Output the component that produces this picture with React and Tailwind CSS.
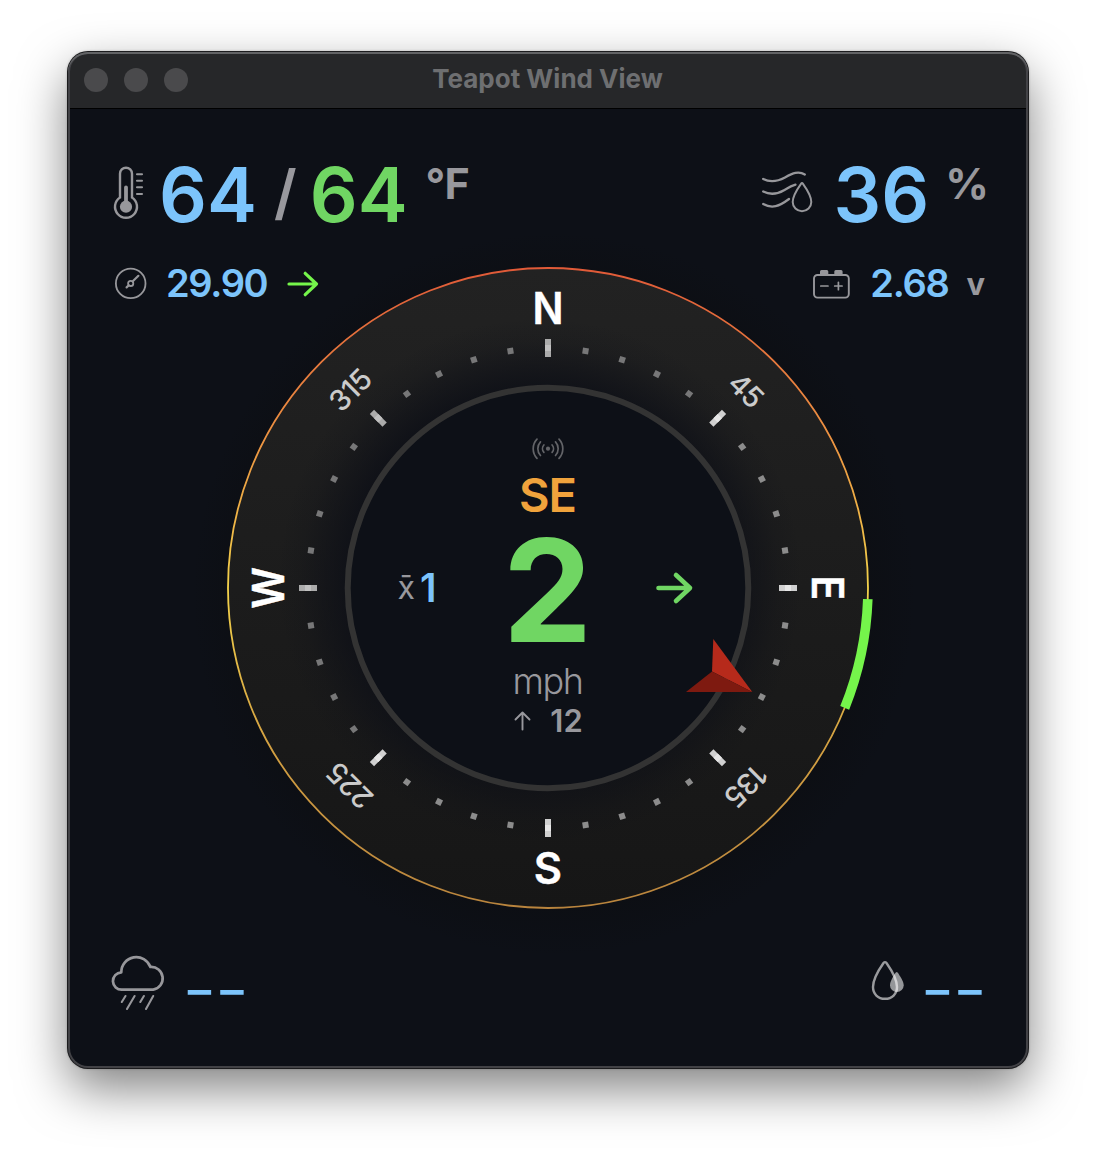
import React from "react";

const MAJOR = [0, 45, 90, 135, 180, 225, 270, 315];
const MINOR = Array.from({ length: 40 }, (_, i) => i * 9).filter((a) => a % 45 !== 0);

const CARDINALS = [
  { angle: 0, text: "N" },
  { angle: 90, text: "E" },
  { angle: 270, text: "W" },
];

const DEGREES = [45, 135, 225, 315];

function ThermometerIcon() {
  return (
    <svg className="w-8 h-14 shrink-0" viewBox="0 0 32 56" fill="none" stroke="#97979b" strokeWidth="2.4" strokeLinecap="round">
      <path d="M8 9.7a6 6 0 0 1 12 0V33.5A11 11 0 1 1 8 33.5Z" />
      <path d="M14 23.5V40" strokeWidth="3.8" />
      <circle cx="14" cy="42.7" r="6.1" fill="#97979b" stroke="none" />
      <path d="M25 10.3h5M25 16.7h5M25 23.3h5M25 30h5" strokeWidth="2.1" />
    </svg>
  );
}

function GaugeIcon() {
  return (
    <svg className="w-[34px] h-[34px] shrink-0" viewBox="0 0 34 34" fill="none" stroke="#97979b" strokeWidth="1.8" strokeLinecap="round">
      <circle cx="16.7" cy="16.4" r="14.8" />
      <circle cx="16.7" cy="16.4" r="2.6" />
      <path d="M18.8 14.3 24.4 8.8M14.8 18.3l-2.2 2.1" strokeWidth="2.2" />
    </svg>
  );
}

function HumidityIcon() {
  return (
    <svg className="w-[54px] h-[46px] shrink-0" viewBox="0 0 54 46" fill="none" stroke="#97979b" strokeWidth="2.3" strokeLinecap="round">
      <path d="M3.2 10.9C11 15 17.5 13.4 25 9.4S38.5 2.5 44.8 6.5" />
      <path d="M3.2 23.5C11 27.5 17.5 26 24 22.2S31 18 35.5 16.7" />
      <path d="M3.2 36C12 41 19 38.5 29 31" />
      <path d="M41 15.8Q42 14.4 43 15.8C46 20 51.3 28.5 51.3 34A9.3 9.2 0 0 1 32.7 34C32.7 28.5 38 20 41 15.8Z" strokeWidth="2" />
    </svg>
  );
}

function BatteryIcon() {
  return (
    <svg className="w-10 h-8 shrink-0" viewBox="0 0 40 32" fill="none" stroke="#97979b" strokeWidth="1.9" strokeLinecap="round">
      <rect x="3" y="7" width="34.8" height="22.6" rx="3.5" />
      <path d="M9 6.5V3.5q0-1.5 1.5-1.5h5.3q1.5 0 1.5 1.5v3zM23.3 6.5V3.5q0-1.5 1.5-1.5h5.3q1.5 0 1.5 1.5v3z" fill="#97979b" stroke="none" />
      <path d="M9.8 18h7.2M23.7 18h7.4M27.4 14.3v7.4" strokeWidth="1.7" />
    </svg>
  );
}

function SignalIcon() {
  return (
    <svg className="w-9 h-[26px]" viewBox="0 0 36 26" fill="none" stroke="#636468" strokeWidth="1.7" strokeLinecap="round">
      <circle cx="18" cy="12.7" r="2.1" fill="#636468" stroke="none" />
      <path d="M13.9 9a5.6 5.6 0 0 0 0 7.4M22.1 9a5.6 5.6 0 0 1 0 7.4" />
      <path d="M10.5 5.9a10 10 0 0 0 0 13.6M25.5 5.9a10 10 0 0 1 0 13.6" />
      <path d="M7 3.1a14 14 0 0 0 0 19.2M29 3.1a14 14 0 0 1 0 19.2" />
    </svg>
  );
}

function RainIcon() {
  return (
    <svg className="w-14 h-[58px] shrink-0" viewBox="0 0 56 58" fill="none" stroke="#97979b" strokeWidth="2.7" strokeLinecap="round">
      <path d="M12 35.7A8.7 8.7 0 0 1 11.3 18.3A15 15 0 0 1 40.4 13A11.45 11.45 0 0 1 43.2 35.7Z" strokeLinejoin="round" />
      <path d="M15.5 42l-3.7 6M24.6 42 17 55M33.9 42l-3.6 6M43.2 42 36 55" strokeWidth="2.1" />
    </svg>
  );
}

function DropsIcon() {
  return (
    <svg className="w-9 h-11 shrink-0" viewBox="0 0 36 44" fill="none">
      <path d="M14.5 5Q16 3.2 17.5 5C21 10 28 21.5 28 29C28 36 23 40.8 16 40.8C9 40.8 4 36 4 29C4 21.5 11 10 14.5 5Z" stroke="#fff" strokeOpacity="0.58" strokeWidth="2.4" />
      <path d="M26.8 14.6Q27.7 13.4 28.6 14.6C31 18 34.7 23.5 34.7 27.3A6.85 6.8 0 0 1 21 27.3C21 23.5 24.4 18 26.8 14.6Z" fill="#fff" fillOpacity="0.56" />
    </svg>
  );
}

function Dial() {
  return (
    <svg className="col-start-1 row-start-1 w-[700px] h-[700px] overflow-visible" viewBox="-350 -350 700 700">
      <defs>
        <linearGradient id="face" x1="0" y1="0" x2="0" y2="1">
          <stop offset="0" stopColor="#222222" />
          <stop offset="1" stopColor="#161616" />
        </linearGradient>
        <linearGradient id="rim" x1="0" y1="0" x2="0" y2="1">
          <stop offset="0" stopColor="#e15a38" />
          <stop offset="0.25" stopColor="#ec8f41" />
          <stop offset="0.5" stopColor="#f3d24b" />
          <stop offset="0.75" stopColor="#d3a042" />
          <stop offset="1" stopColor="#b9843d" />
        </linearGradient>
        <radialGradient id="shade" gradientUnits="userSpaceOnUse" cx="-8" cy="-8" r="262">
          <stop offset="0.74" stopColor="#0e1017" stopOpacity="0.85" />
          <stop offset="0.83" stopColor="#0e1017" stopOpacity="0.5" />
          <stop offset="0.91" stopColor="#0e1017" stopOpacity="0.18" />
          <stop offset="1" stopColor="#0e1017" stopOpacity="0" />
        </radialGradient>
        <radialGradient id="halo" gradientUnits="userSpaceOnUse" cx="6" cy="6" r="362">
          <stop offset="0.87" stopColor="#0c0d10" stopOpacity="0.45" />
          <stop offset="1" stopColor="#0c0d10" stopOpacity="0" />
        </radialGradient>
      </defs>
      <circle cx="6" cy="6" r="362" fill="url(#halo)" />
      <circle r="320" fill="url(#face)" stroke="url(#rim)" strokeWidth="1.8" />
      <circle cx="-8" cy="-8" r="262" fill="url(#shade)" />
      {MINOR.map((angle) => (
        <rect key={angle} x="-3" y="-243" width="6" height="6" fill={angle < 225 && angle > 45 ? "#8c8c8c" : "#777778"} transform={`rotate(${angle})`} />
      ))}
      {MAJOR.map((angle) => (
        <g key={angle} transform={`rotate(${angle})`}>
          <rect x="-3" y="-249" width="6" height="18" fill={angle > 0 && angle < 270 ? "#d0d0d0" : "#ababab"} />
          <rect x="-3" y="-243" width="6" height="6" fill={angle > 0 && angle < 270 ? "#e6e6e6" : "#c0c0c0"} />
        </g>
      ))}
      {CARDINALS.map(({ angle, text }) => (
        <text key={angle} y="-264.5" textAnchor="middle" className="text-[43.5px] font-semibold fill-white" stroke="#fff" strokeWidth="0.4" transform={`rotate(${angle}) scale(0.94 1)`}>
          {text}
        </text>
      ))}
      <text y="295.5" textAnchor="middle" className="text-[43.5px] font-semibold fill-white" stroke="#fff" strokeWidth="0.4">
        S
      </text>
      {DEGREES.map((angle) => (
        <text key={angle} y="-269.5" textAnchor="middle" className="text-[29px] font-medium tracking-[-0.03em] fill-[#cbcbcb]" transform={`rotate(${angle})`}>
          {angle}
        </text>
      ))}
      <circle r="200.3" fill="#0d1017" stroke="#333333" strokeWidth="6" />
      <path d="M319.8 11.2A320 320 0 0 1 296.7 119.9" fill="none" stroke="#75f54b" strokeWidth="9.6" />
      <path d="M165.3 51 204.3 104 164 83.5Z" fill="#b62a1b" />
      <path d="M138 104H204.3L164 83.5Z" fill="#7e1a10" />
    </svg>
  );
}

function Readings() {
  return (
    <div className="col-start-1 row-start-1 w-[400px] h-[400px] flex flex-col items-center pt-12 leading-none">
      <SignalIcon />
      <div className="mt-[9px] pr-px text-[47px] leading-[47px] font-semibold text-[#f0a33c] tracking-[-0.02em]">SE</div>
      <div className="mt-[2px] h-[141px] w-[301px] grid grid-cols-[1fr_auto_1fr] items-center">
        <div className="flex items-end pb-[7px]">
          <span className="mb-[3px] text-[32px] font-normal text-[#98989d]">x̄</span>
          <span className="ml-[5px] text-[39px] font-semibold text-[#7cc4fb]">1</span>
        </div>
        <div className="pr-px text-[142px] leading-[141px] font-bold text-[#70d663]">2</div>
        <svg className="w-[40px] h-[36px] mb-[5px] mr-[3px] justify-self-end" viewBox="0 0 40 36" fill="none" stroke="#70d663" strokeWidth="4.6" strokeLinecap="round" strokeLinejoin="round">
          <path d="M2.5 18H34M20 5 34 18 20 31" />
        </svg>
      </div>
      <div className="mt-[3px] pr-px text-[36px] leading-[35px] font-[350] text-[#98989d] tracking-[-0.04em]">mph</div>
      <div className="mt-[6px] pl-px flex items-center gap-[18px] text-[#98989d]">
        <svg className="w-[18px] h-5" viewBox="0 0 18 20" fill="none" stroke="currentColor" strokeWidth="1.9" strokeLinecap="round" strokeLinejoin="round">
          <path d="M8.5 18.5V2M1.5 8.5 8.5 1.5 15.5 8.5" />
        </svg>
        <span className="text-[31px] leading-[31px] font-semibold">12</span>
      </div>
    </div>
  );
}

export default function App() {
  return (
    <div className="w-[1096px] h-[1152px] bg-white pt-[52px] pl-[68px] overflow-hidden font-['Inter',sans-serif]">
      <div className="relative w-[960px] h-[1016px] flex flex-col rounded-[20px] bg-[#0d1017] shadow-[0_0_0_1px_#1c1c1e,0_0_3px_rgba(0,0,0,0.5),0_20px_50px_rgba(0,0,0,0.5)]">
        <header className="h-14 shrink-0 rounded-t-[20px] bg-[#262729] grid grid-cols-[1fr_auto_1fr] items-center px-4">
          <div className="flex gap-4">
            <span className="size-6 rounded-full bg-[#4a4a4c]" />
            <span className="size-6 rounded-full bg-[#4a4a4c]" />
            <span className="size-6 rounded-full bg-[#4a4a4c]" />
          </div>
          <h1 className="pb-[3px] pr-px text-[26px] leading-none font-bold text-[#6e6f71]">Teapot Wind View</h1>
        </header>

        <main className="h-[960px] grid place-items-center rounded-b-[20px] shadow-[inset_0_1px_0_#000]">
          <Dial />
          <Readings />

          <div className="col-start-1 row-start-1 w-full h-full flex flex-col pt-[49px] pb-[46px] pl-[42px] pr-[39px] leading-none">
            <div className="flex justify-between items-start h-[74px]">
              <div className="flex items-start pl-[2px] text-[75px] font-semibold leading-[75px]">
                <div className="pt-[7px]"><ThermometerIcon /></div>
                <span className="ml-[15px] text-[#7cc4fb]">64</span>
                <span className="ml-[17px] mt-[5px] text-[60px] leading-[60px] text-[#98989d]">/</span>
                <span className="ml-[13px] text-[#70d663]">64</span>
                <span className="ml-[18px] mt-[5px] text-[43px] leading-[43px] font-bold tracking-[-0.02em] text-[#98989d]">°F</span>
              </div>
              <div className="flex items-start pr-px text-[75px] font-semibold leading-[75px]">
                <div className="pt-[11px]"><HumidityIcon /></div>
                <span className="ml-[19px] text-[#7cc4fb]">36</span>
                <span className="ml-[16px] mt-[5px] text-[43px] leading-[43px] font-bold tracking-[-0.02em] text-[#98989d]">%</span>
              </div>
            </div>

            <div className="mt-[33px] flex justify-between items-center h-[38px] text-[38px] font-semibold leading-[38px]">
              <div className="flex items-center pl-[4px] pt-[2px]">
                <GaugeIcon />
                <span className="ml-[18px] pb-[2px] tracking-[-0.035em] text-[#7cc4fb]">29.90</span>
                <svg className="ml-[20px] w-8 h-7" viewBox="0 0 32 28" fill="none" stroke="#75f54b" strokeWidth="3.2" strokeLinecap="round" strokeLinejoin="round">
                  <path d="M2 14H29.5M18.2 3.3 29.5 14 18.2 24.7" />
                </svg>
              </div>
              <div className="flex items-center pt-[2px] mr-[4px]">
                <BatteryIcon />
                <span className="ml-[19px] pb-[2px] tracking-[-0.035em] text-[#7cc4fb]">2.68</span>
                <span className="ml-[18px] text-[31px] font-bold text-[#98989d]">v</span>
              </div>
            </div>

            <div className="mt-auto flex justify-between items-start text-[77px] font-[350] leading-[68px] tracking-[-0.03em] text-[#7cc4fb]">
              <div className="flex items-start">
                <RainIcon />
                <span className="ml-[16px]">--</span>
              </div>
              <div className="flex items-start pr-[4px]">
                <div className="pt-[4px]"><DropsIcon /></div>
                <span className="ml-[15px]">--</span>
              </div>
            </div>
          </div>
        </main>

        <div className="absolute inset-0 rounded-[20px] pointer-events-none shadow-[inset_0_2px_0_#626365,inset_0_0_0_2px_#424246]" />
      </div>
    </div>
  );
}
